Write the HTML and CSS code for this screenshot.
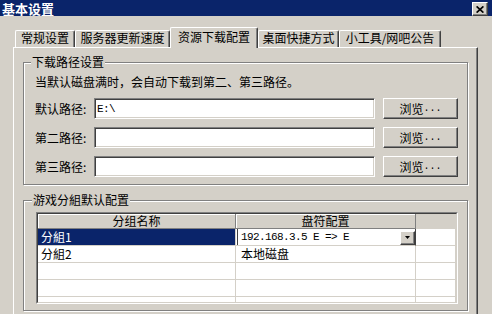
FILE: index.html
```html
<!DOCTYPE html>
<html>
<head>
<meta charset="utf-8">
<title>基本设置</title>
<link rel="stylesheet" href="styles.css">
</head>
<body>
<div class="window">
  <div class="titlebar">
    <span class="title">基本设置</span>
    <span class="close"><svg width="8" height="7" viewBox="0 0 8 7"><path d="M0.6 0.4 L7.4 6.6 M7.4 0.4 L0.6 6.6" stroke="#000" stroke-width="1.7" fill="none"/></svg></span>
  </div>
  <div class="client">
    <div class="tabs">
      <div class="tab t1">常规设置</div>
      <div class="tab t2">服务器更新速度</div>
      <div class="tab active t3">资源下载配置</div>
      <div class="tab t4">桌面快捷方式</div>
      <div class="tab t5">小工具/网吧公告</div>
    </div>
    <div class="panel">
      <fieldset class="group g1">
        <legend>下载路径设置</legend>
        <p class="hint">当默认磁盘满时，会自动下载到第二、第三路径。</p>
        <div class="row">
          <span class="label">默认路径:</span>
          <div class="input"><span class="mono">E:\</span></div>
          <div class="btn">浏览<span class="dots">...</span></div>
        </div>
        <div class="row">
          <span class="label">第二路径:</span>
          <div class="input"></div>
          <div class="btn">浏览<span class="dots">...</span></div>
        </div>
        <div class="row">
          <span class="label">第三路径:</span>
          <div class="input"></div>
          <div class="btn">浏览<span class="dots">...</span></div>
        </div>
      </fieldset>
      <fieldset class="group g2">
        <legend>游戏分組默认配置</legend>
        <div class="grid">
          <div class="grid-inner">
            <div class="ghead">
              <div class="hc c1">分组名称</div>
              <div class="hc c2">盘符配置</div>
              <div class="hc c3 blank"></div>
            </div>
            <div class="grow">
              <div class="gc c1 sel">分組1</div>
              <div class="gc c2 editor">
                <span class="mono">192.168.3.5 E =&gt; E</span>
                <span class="drop"><svg width="5" height="3" viewBox="0 0 5 3"><path d="M0 0 H5 L2.5 3 Z" fill="#000"/></svg></span>
              </div>
              <div class="gc c3"></div>
            </div>
            <div class="grow">
              <div class="gc c1">分組2</div>
              <div class="gc c2">本地磁盘</div>
              <div class="gc c3"></div>
            </div>
            <div class="grow">
              <div class="gc c1"></div>
              <div class="gc c2"></div>
              <div class="gc c3"></div>
            </div>
            <div class="grow">
              <div class="gc c1"></div>
              <div class="gc c2"></div>
              <div class="gc c3"></div>
            </div>
            <div class="grow">
              <div class="gc c1"></div>
              <div class="gc c2"></div>
              <div class="gc c3"></div>
            </div>
          </div>
        </div>
      </fieldset>
    </div>
  </div>
</div>
</body>
</html>
```

FILE: styles.css
```css
* { box-sizing: border-box; }
html, body { margin: 0; padding: 0; }
body {
  width: 492px;
  height: 314px;
  overflow: hidden;
  background: #d4d0c8;
  font-family: "Noto Sans CJK SC", "Noto Sans", sans-serif;
  font-size: 12px;
  color: #000;
}
.window { width: 492px; height: 314px; overflow: hidden; }

.titlebar {
  height: 16px;
  background: #0a246a;
  display: flex;
  align-items: center;
  justify-content: space-between;
  padding: 0 4px 0 2px;
}
.title {
  color: #fff;
  font-weight: bold;
  font-size: 13px;
  line-height: 13px;
}
.close {
  width: 16px;
  height: 14px;
  margin-top: 2px;
  background: #d4d0c8;
  border: 1px solid;
  border-color: #fff #404040 #404040 #fff;
  box-shadow: inset -1px -1px 0 #808080;
  display: flex;
  align-items: center;
  justify-content: center;
}
.close svg { display: block; }

.client { padding: 11px 0 0 13px; }

.tabs {
  display: flex;
  align-items: flex-end;
  height: 21px;
  padding-left: 2px;
  position: relative;
  z-index: 1;
  margin-bottom: -1px;
}
.tab {
  height: 17px;
  margin-bottom: 1px;
  border-top: 1px solid #fff;
  border-left: 1px solid #fff;
  border-right: 1px solid #404040;
  border-radius: 2px 2px 0 0;
  box-shadow: inset -1px 0 0 #808080;
  background: #d4d0c8;
  text-align: center;
  line-height: 14px;
  white-space: nowrap;
}
.t1 { width: 60px; }
.t2 { width: 95px; }
.t3 { width: 88px; }
.t4 { width: 81px; }
.t5 { width: 102px; }
.tab.active {
  height: 21px;
  margin-bottom: 0;
  line-height: 17px;
}

.panel {
  width: 465px;
  height: 280px;
  border-top: 1px solid #fff;
  border-left: 1px solid #fff;
  border-right: 1px solid #404040;
  box-shadow: inset -1px 0 0 #808080;
  padding: 8px 9px 0 9px;
}

.group {
  margin: 0;
  min-width: 0;
  border: 1px solid #808080;
  box-shadow: 1px 1px 0 #fff, inset 1px 1px 0 #fff;
}
.group legend {
  margin-left: -4px;
  padding: 0 1px;
  line-height: 12px;
  background: #d4d0c8;
}
.g1 { width: 445px; padding: 7px 9px 7px 11px; }
.g2 { width: 445px; margin-top: 9px; padding: 6px 9px 6px 12px; }

.hint { margin: 0 0 9px 0; line-height: 14px; white-space: nowrap; }

.row { display: flex; align-items: center; height: 21px; }
.row + .row { margin-top: 8px; }
.label { width: 59px; white-space: nowrap; }
.input {
  width: 281px;
  height: 21px;
  margin-right: 8px;
  background: #fff;
  border: 1px solid;
  border-color: #808080 #fff #fff #808080;
  box-shadow: inset 1px 1px 0 #404040, inset -1px -1px 0 #d4d0c8;
  padding-left: 2px;
  display: flex;
  align-items: center;
}
.mono {
  font-family: "Liberation Mono", monospace;
  font-size: 11px;
  letter-spacing: -0.6px;
  white-space: pre;
}
.btn {
  width: 75px;
  height: 21px;
  border: 1px solid;
  border-color: #fff #404040 #404040 #fff;
  box-shadow: inset -1px -1px 0 #808080;
  display: flex;
  align-items: center;
  justify-content: center;
  line-height: 14px;
}
.dots {
  font-family: "Liberation Mono", monospace;
  font-size: 10px;
  vertical-align: -2px;
}

.grid {
  width: 422px;
  height: 92px;
  border: 1px solid;
  border-color: #808080 #fff #fff #808080;
}
.grid-inner {
  height: 90px;
  border: 1px solid;
  border-color: #404040 #d4d0c8 #d4d0c8 #404040;
  background: #fff;
  overflow: hidden;
}
.ghead { display: flex; height: 15px; background: #d4d0c8; }
.hc {
  height: 15px;
  border-right: 1px solid #808080;
  border-bottom: 1px solid #808080;
  box-shadow: inset 1px 1px 0 #fff;
  text-align: center;
  line-height: 14px;
}
.hc.blank { border: none; box-shadow: none; }
.c1 { width: 198px; }
.c2 { width: 180px; }
.c3 { width: 40px; }

.grow { display: flex; height: 17px; }
.gc {
  height: 17px;
  border-right: 1px solid #d4d0c8;
  border-bottom: 1px solid #d4d0c8;
  line-height: 16px;
  white-space: nowrap;
}
.gc.c1 { padding-left: 3px; }
.gc.c2 { padding-left: 5px; }
.gc.sel { background: #0a246a; color: #fff; }
.gc.editor {
  display: flex;
  align-items: center;
  justify-content: space-between;
  border-right-color: #404040;
  box-shadow: inset 1px 0 0 #fff, inset 2px 0 0 #404040;
}
.drop {
  width: 15px;
  height: 14px;
  margin-top: 1px;
  border: 1px solid;
  border-color: #fff #404040 #404040 #fff;
  box-shadow: inset -1px -1px 0 #808080;
  background: #d4d0c8;
  display: flex;
  align-items: center;
  justify-content: center;
}
.drop svg { display: block; }
```
